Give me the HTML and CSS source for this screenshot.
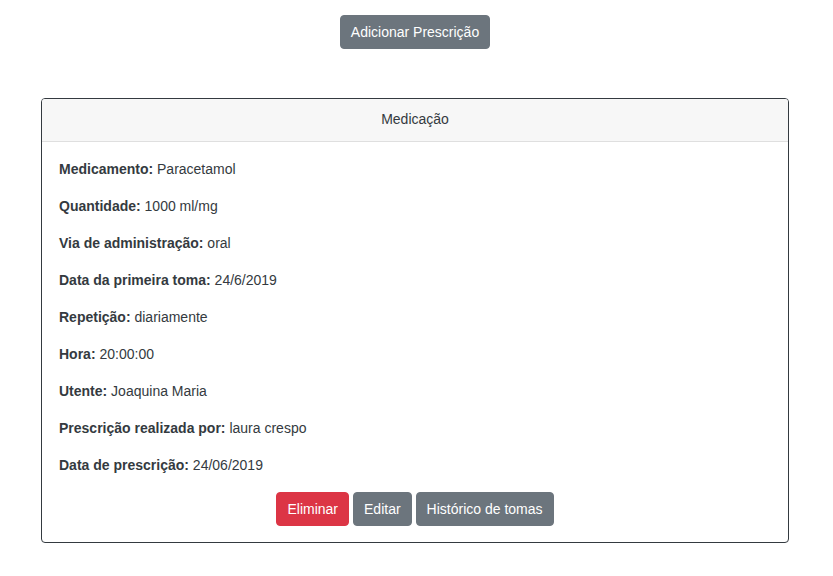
FILE: index.html
```html
<!DOCTYPE html>
<html lang="pt">
<head>
<meta charset="utf-8">
<title>Medicação</title>
<link rel="stylesheet" href="styles.css">
</head>
<body>
<div class="page">
  <div class="top">
    <button class="btn btn-secondary">Adicionar Prescrição</button>
  </div>
  <div class="card">
    <div class="card-header">Medicação</div>
    <div class="card-body">
      <p><b>Medicamento:</b> Paracetamol</p>
      <p><b>Quantidade:</b> 1000 ml/mg</p>
      <p><b>Via de administração:</b> oral</p>
      <p><b>Data da primeira toma:</b> 24/6/2019</p>
      <p><b>Repetição:</b> diariamente</p>
      <p><b>Hora:</b> 20:00:00</p>
      <p><b>Utente:</b> Joaquina Maria</p>
      <p><b>Prescrição realizada por:</b> laura crespo</p>
      <p><b>Data de prescrição:</b> 24/06/2019</p>
      <div class="actions">
        <button class="btn btn-danger">Eliminar</button>
        <button class="btn btn-secondary">Editar</button>
        <button class="btn btn-secondary">Histórico de tomas</button>
      </div>
    </div>
  </div>
</div>
</body>
</html>
```
FILE: styles.css
```css
html, body {
  margin: 0;
  padding: 0;
  background: #fff;
}
body {
  font-family: "Liberation Sans", Arial, sans-serif;
  font-size: 14px;
  line-height: 1.5;
  color: #212529;
}
.page {
  padding: 15px 44px 0 41px;
}
.top {
  text-align: center;
  margin-bottom: 49px;
}
.btn {
  display: inline-block;
  font-family: inherit;
  font-size: 14px;
  line-height: 20px;
  padding: 6px 10px;
  border: 1px solid transparent;
  border-radius: 4px;
  color: #fff;
  cursor: pointer;
  margin: 0;
}
.btn-secondary {
  background: #6c757d;
  border-color: #6c757d;
}
.btn-danger {
  background: #dc3545;
  border-color: #dc3545;
}
.card {
  border: 1px solid #343a40;
  border-radius: 4px;
  overflow: hidden;
  color: #343a40;
}
.card-header {
  background: #f7f7f7;
  border-bottom: 1px solid #dfdfdf;
  text-align: center;
  padding: 10px 18px 11px;
}
.card-body {
  padding: 17px 17px 16px;
}
.card-body p {
  margin: 0 0 16px;
}
.card-body b {
  font-weight: 700;
}
.actions {
  display: flex;
  justify-content: center;
  gap: 4px;
}
```
